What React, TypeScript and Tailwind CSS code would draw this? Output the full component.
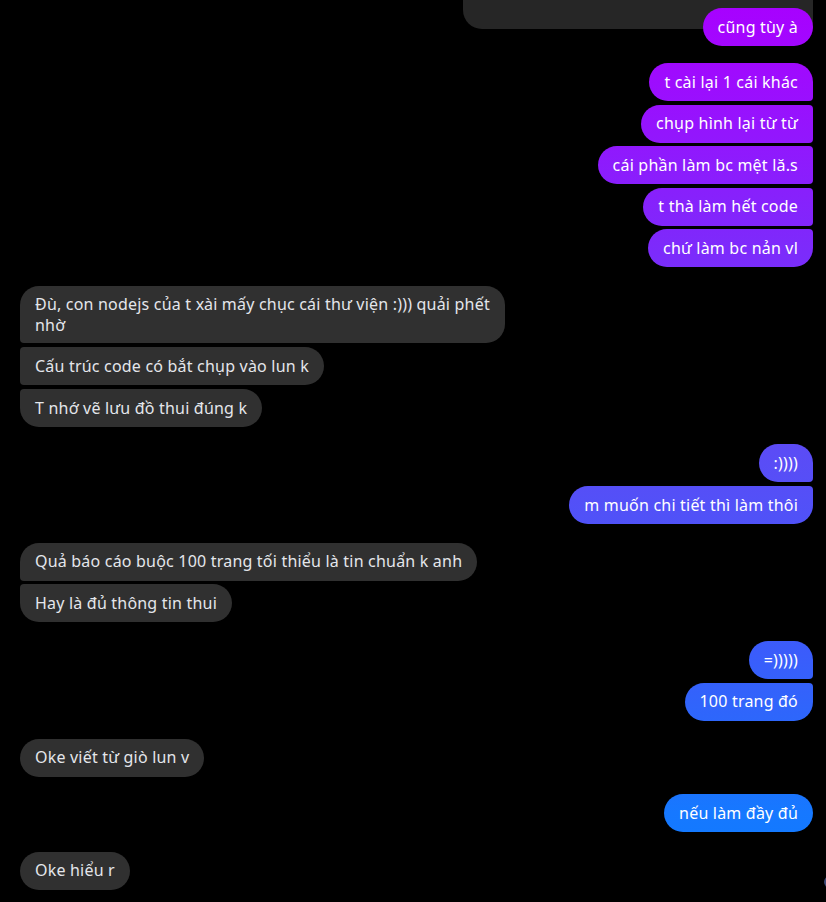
import React from "react";

type Pos = "single" | "first" | "middle" | "last";

const grad =
  "bg-[linear-gradient(to_bottom,#a800ff_0%,#9f0bfe_8%,#7c2bfb_28%,#5b4cf6_50%,#3b5cfb_72%,#2d67fb_80%,#1678ff_90%,#0a7cff_100%)] bg-fixed";

function Bubble({
  text,
  mine,
  pos = "single",
  mt = "",
  multi,
}: {
  text: React.ReactNode;
  mine?: boolean;
  pos?: Pos;
  mt?: string;
  multi?: boolean;
}) {
  let r = "rounded-[19px]";
  if (mine) {
    if (pos === "first") r = "rounded-[19px] rounded-br-[4px]";
    if (pos === "middle") r = "rounded-[19px] rounded-tr-[4px] rounded-br-[4px]";
    if (pos === "last") r = "rounded-[19px] rounded-tr-[4px]";
  } else {
    if (pos === "first") r = "rounded-[19px] rounded-bl-[4px]";
    if (pos === "middle") r = "rounded-[19px] rounded-tl-[4px] rounded-bl-[4px]";
    if (pos === "last") r = "rounded-[19px] rounded-tl-[4px]";
  }
  const pad = multi ? "py-[8px] leading-[20.5px]" : "py-[9.5px] leading-[19px]";
  return (
    <div
      className={`relative px-[15px] ${pad} text-[16px] tracking-[0.2px] w-fit whitespace-nowrap ${r} ${mt} ${
        mine ? `${grad} text-white self-end` : "bg-[#303030] text-[#e4e6eb] self-start"
      }`}
    >
      {text}
    </div>
  );
}

export default function App() {
  return (
    <div
      className="relative w-[826px] h-[902px] bg-black overflow-hidden"
      style={{ fontFamily: '"Noto Sans", "Open Sans", sans-serif' }}
    >
      <div className="flex flex-col pl-[20px] pr-[13px]">
        <div className="self-end w-[350px] h-[29px] bg-[#262626] rounded-bl-[19px]" />
        <Bubble mine text="cũng tùy à" mt="-mt-[21px]" />

        <Bubble mine pos="first" text="t cài lại 1 cái khác" mt="mt-[17px]" />
        <Bubble mine pos="middle" text="chụp hình lại từ từ" mt="mt-[3.5px]" />
        <Bubble mine pos="middle" text="cái phần làm bc mệt lă.s" mt="mt-[3.5px]" />
        <Bubble mine pos="middle" text="t thà làm hết code" mt="mt-[3.5px]" />
        <Bubble mine pos="last" text="chứ làm bc nản vl" mt="mt-[3.5px]" />

        <Bubble
          pos="first"
          multi
          text={
            <>
              Đù, con nodejs của t xài mấy chục cái thư viện :))) quải phết
              <br />
              nhờ
            </>
          }
          mt="mt-[19px]"
        />
        <Bubble pos="middle" text="Cấu trúc code có bắt chụp vào lun k" mt="mt-[4px]" />
        <Bubble pos="last" text="T nhớ vẽ lưu đồ thui đúng k" mt="mt-[4px]" />

        <Bubble mine pos="first" text=":))))" mt="mt-[17px]" />
        <Bubble mine pos="last" text="m muốn chi tiết thì làm thôi" mt="mt-[4px]" />

        <Bubble
          pos="first"
          text="Quả báo cáo buộc 100 trang tối thiểu là tin chuẩn k anh"
          mt="mt-[18.5px]"
        />
        <Bubble pos="last" text="Hay là đủ thông tin thui" mt="mt-[3.5px]" />

        <Bubble mine pos="first" text="=)))))" mt="mt-[19px]" />
        <Bubble mine pos="last" text="100 trang đó" mt="mt-[3.5px]" />

        <Bubble text="Oke viết từ giò lun v" mt="mt-[18px]" />

        <Bubble mine text="nếu làm đầy đủ" mt="mt-[17.5px]" />

        <Bubble text="Oke hiểu r" mt="mt-[19.5px]" />
      </div>
      <div className="absolute left-[824px] top-[876px] w-[12px] h-[12px] rounded-full bg-[#3b4a78]" />
    </div>
  );
}
